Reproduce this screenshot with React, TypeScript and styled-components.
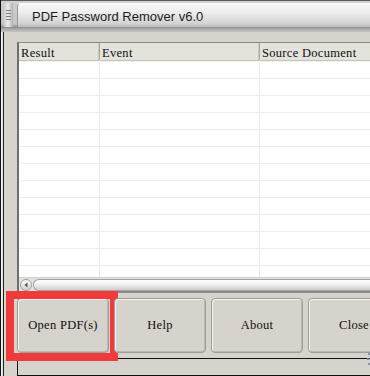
import styled, { createGlobalStyle } from "styled-components";

const GlobalStyle = createGlobalStyle`
  html, body {
    margin: 0;
    padding: 0;
    background: #d6d3cd;
  }
`;

const columns = [
  { label: "Result", width: 81 },
  { label: "Event", width: 160 },
  { label: "Source Document", width: 200 },
];
const rowCount = 13;
const buttons = ["Open PDF(s)", "Help", "About", "Close"];

const Window = styled.div`
  position: relative;
  width: 370px;
  height: 376px;
  overflow: hidden;
  display: flex;
  flex-direction: column;
  background: #d6d3cd;
  border-left: 1px solid #111;
  box-shadow: inset 1px 0 #f2f2f2, inset 2px 0 #e0e0e0, inset 3px 0 #222;
  box-sizing: border-box;
`;

const TitleBar = styled.div`
  height: 33px;
  display: flex;
  align-items: flex-start;
  gap: 4px;
  padding-top: 3px;
  box-sizing: border-box;
  background: linear-gradient(#5a5a5a 0, #5a5a5a 1px, #cfcfcf 1px, #c4c4c4 24px, #8e8e8e 27px, #b4b4b4 30px, #cfccc6 33px);
`;

const Grip = styled.div`
  width: 10px;
  height: 24px;
  margin-left: 2px;
  border-radius: 3px 0 0 3px;
  background: linear-gradient(90deg, #c4c4c4, #ececec 50%, #b0b0b0);
  display: flex;
  flex-direction: column;
  justify-content: center;
  gap: 2px;
  align-items: center;
`;

const GripDot = styled.span`
  width: 5px;
  height: 1px;
  background: #808080;
`;

const Tab = styled.div`
  flex: 1;
  height: 24px;
  display: flex;
  align-items: center;
  padding: 1px 0 0 14px;
  box-sizing: border-box;
  border-radius: 4px 0 0 0;
  border-left: 1px solid #9a9a9a;
  border-top: 1px solid #ffffff;
  background: linear-gradient(#f7f7f7, #ececec 40%, #d2d2d2 85%, #b9b9b9);
  font-family: "Liberation Sans", Arial, sans-serif;
  font-size: 13px;
  color: #1c1c1c;
`;

const Panel = styled.div`
  flex: 1;
  display: flex;
  flex-direction: column;
  padding: 10px 0 0 16px;
  box-sizing: border-box;
`;

const ListView = styled.div`
  height: 248px;
  display: flex;
  flex-direction: column;
  background: #ffffff;
  border-top: 1px solid #8a8a8a;
  border-left: 2px solid #6e6e6e;
  border-bottom: 2px solid #8c8c8c;
  overflow: hidden;
`;

const HeaderRow = styled.div`
  display: flex;
  height: 18px;
  flex: none;
  background: #e3e2db;
  border-bottom: 1px solid #f4f4f2;
`;

const HeaderCell = styled.div<{ $w: number }>`
  width: ${(p) => p.$w}px;
  flex: none;
  padding: 1px 0 0 2px;
  box-sizing: border-box;
  border-right: 1px solid #a8a7a0;
  box-shadow: inset -1px 0 #c9c8c1, inset 0 -1px #c4c3bb;
  border-radius: 0 0 3px 0;
  font-family: "Liberation Serif", "Times New Roman", serif;
  font-size: 12.5px;
  letter-spacing: 0.3px;
  line-height: 18px;
  color: #111;
  white-space: nowrap;
`;

const Body = styled.div`
  flex: 1;
  overflow: hidden;
`;

const Row = styled.div`
  display: flex;
  height: 17px;
  box-sizing: border-box;
  border-bottom: 1px solid #ededed;
`;

const Cell = styled.div<{ $w: number }>`
  width: ${(p) => p.$w}px;
  flex: none;
  box-sizing: border-box;
  border-right: 1px solid #e8e8e8;
`;

const ScrollBar = styled.div`
  height: 13px;
  flex: none;
  display: flex;
  align-items: center;
  gap: 1px;
  padding-left: 1px;
  background: #e2e1dc;
  border-top: 1px solid #d0d0d0;
`;

const ArrowButton = styled.div`
  width: 12px;
  height: 12px;
  border-radius: 50%;
  border: 1px solid #a0a0a0;
  box-sizing: border-box;
  background: linear-gradient(#ffffff, #cfcfcf);
  display: flex;
  align-items: center;
  justify-content: center;
`;

const Thumb = styled.div`
  flex: 1;
  height: 12px;
  border-radius: 6px 0 0 6px;
  border: 1px solid #a2a2a2;
  border-right: none;
  box-sizing: border-box;
  background: linear-gradient(#ffffff, #f3f3f3 40%, #cdcdcd);
`;

const ButtonRow = styled.div`
  display: flex;
  gap: 5px;
  margin-top: 5px;
  height: 55px;
  flex: none;
`;

const PushButton = styled.div`
  position: relative;
  width: 92px;
  flex: none;
  display: flex;
  align-items: center;
  justify-content: center;
  box-sizing: border-box;
  border: 1px solid #a09d96;
  border-radius: 4px;
  background: #d6d3cc;
  box-shadow: inset 1px 1px #f4f3ef, inset -1px -1px #bab7b0;
  font-family: "Liberation Serif", "Times New Roman", serif;
  font-size: 12.5px;
  letter-spacing: 0.3px;
  color: #111;
  white-space: nowrap;
`;

const Highlight = styled.div`
  position: absolute;
  left: -12px;
  top: -8px;
  width: 112px;
  height: 70px;
  box-sizing: border-box;
  border: 8px solid #ef3b3b;
  pointer-events: none;
`;

const StatusBox = styled.div`
  margin-top: 5px;
  height: 16px;
  flex: none;
  border: 1px solid #111;
  border-right: none;
  background: #d6d3cd;
`;

// little blue resize dots sitting over the bottom right corner
const ResizeGrip = styled.svg`
  position: absolute;
  right: 0;
  bottom: 10px;
`;

export default function App() {
  return (
    <>
      <GlobalStyle />
      <Window>
        <TitleBar>
          <Grip>
            <GripDot />
            <GripDot />
            <GripDot />
            <GripDot />
          </Grip>
          <Tab>PDF Password Remover v6.0</Tab>
        </TitleBar>
        <Panel>
          <ListView>
            <HeaderRow>
              {columns.map((c) => (
                <HeaderCell key={c.label} $w={c.width}>
                  {c.label}
                </HeaderCell>
              ))}
            </HeaderRow>
            <Body>
              {Array.from({ length: rowCount }).map((_, i) => (
                <Row key={i}>
                  {columns.map((c) => (
                    <Cell key={c.label} $w={c.width} />
                  ))}
                </Row>
              ))}
            </Body>
            <ScrollBar>
              <ArrowButton>
                <svg width="6" height="6" viewBox="0 0 6 6">
                  <path d="M4.5 0.5 L1.5 3 L4.5 5.5 Z" fill="#555" />
                </svg>
              </ArrowButton>
              <Thumb />
            </ScrollBar>
          </ListView>
          <ButtonRow>
            {buttons.map((b, i) => (
              <PushButton key={b}>
                {b}
                {i === 0 && <Highlight />}
              </PushButton>
            ))}
          </ButtonRow>
          <StatusBox />
        </Panel>
        <ResizeGrip width="4" height="14" viewBox="0 0 4 14">
          <rect x="2" y="1" width="2" height="2" fill="#7d95b8" />
          <rect x="1" y="6" width="2" height="2" fill="#6c86ad" />
          <rect x="2" y="11" width="2" height="2" fill="#7d95b8" />
        </ResizeGrip>
      </Window>
    </>
  );
}
